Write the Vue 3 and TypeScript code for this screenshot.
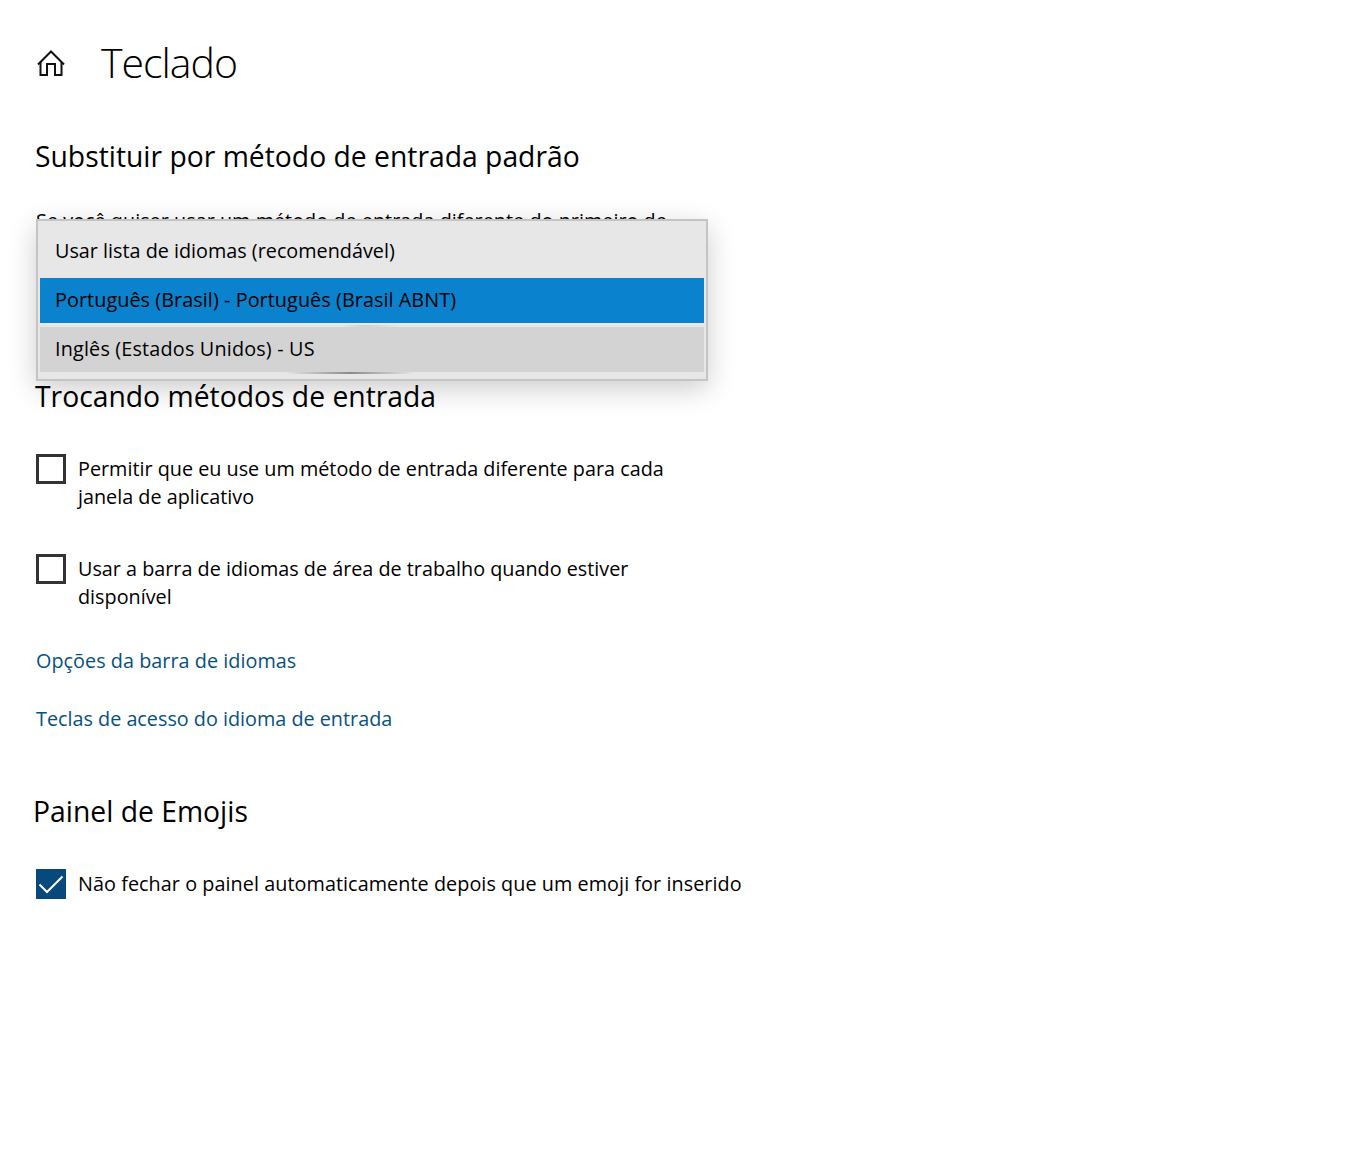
<script setup lang="ts">
const options = [
  { label: 'Usar lista de idiomas (recomendável)', cls: 'opt-plain' },
  { label: 'Português (Brasil) - Português (Brasil ABNT)', cls: 'opt-selected' },
  { label: 'Inglês (Estados Unidos) - US', cls: 'opt-hover' },
]
</script>

<template>
  <main class="page">
    <header class="head">
      <svg class="home" width="30" height="30" viewBox="0 0 30 30" fill="none" stroke="#111" stroke-width="2">
        <path d="M2 16.5 15 3.5l13 13" />
        <path d="M4.5 14v13h6.5V16h8v11h6.5V14" />
      </svg>
      <h1>Teclado</h1>
    </header>

    <section class="override">
      <h2>Substituir por método de entrada padrão</h2>
      <p class="hidden-text">Se você quiser usar um método de entrada diferente do primeiro de</p>
      <div class="popup">
        <div v-for="o in options" :key="o.label" class="opt" :class="o.cls">{{ o.label }}</div>
      </div>
    </section>

    <section class="switching">
      <h2>Trocando métodos de entrada</h2>
      <label class="check first">
        <span class="box"></span>
        <span class="lbl">Permitir que eu use um método de entrada diferente para cada janela de aplicativo</span>
      </label>
      <label class="check second">
        <span class="box"></span>
        <span class="lbl">Usar a barra de idiomas de área de trabalho quando estiver disponível</span>
      </label>
      <a class="link first-link">Opções da barra de idiomas</a>
      <a class="link second-link">Teclas de acesso do idioma de entrada</a>
    </section>

    <section class="emoji">
      <h2>Painel de Emojis</h2>
      <label class="check wide">
        <span class="box on">
          <svg width="30" height="30" viewBox="0 0 30 30" fill="none" stroke="#fff" stroke-width="2">
            <path d="M3.5 15.5l7.5 7.5L26.5 7.5" />
          </svg>
        </span>
        <span class="lbl">Não fechar o painel automaticamente depois que um emoji for inserido</span>
      </label>
    </section>
  </main>
</template>

<style>
html, body { background: #fff; }
</style>

<style scoped>
.page {
  width: 1350px;
  height: 1169px;
  box-sizing: border-box;
  padding: 36px 0 0 36px;
  overflow: hidden;
  background: #fff;
  color: #000;
  font-family: "Open Sans", "Noto Sans", sans-serif;
  font-size: 19.8px;
  line-height: 28px;
}
.head { display: flex; align-items: center; gap: 35px; height: 54px; }
.home { flex: none; }
h1 { margin: 0 0 2px; font-size: 41px; font-weight: 300; line-height: 50px; letter-spacing: -1px; }
h2 { margin: 0 0 0 -1px; font-size: 28.3px; font-weight: 400; line-height: 38px; }
.override { position: relative; margin-top: 47px; height: 240px; }
.hidden-text { margin: 32px 0 0; letter-spacing: 0.03px; }
.popup {
  position: absolute;
  left: 0;
  top: 82px;
  width: 672px;
  height: 162px;
  box-sizing: border-box;
  padding: 0 2px;
  border: 2px solid #c4c4c4;
  background: #e7e7e7;
  box-shadow: 0 8px 26px rgba(0, 0, 0, 0.2);
}
.opt { position: relative; height: 45px; padding-left: 15px; line-height: 45px; }
.opt-plain { margin: 7px 0 5px; }
.opt-selected { background: #0a82ce; line-height: 43px; letter-spacing: 0.07px; }
.opt-hover { margin-top: 4px; background: #d3d3d3; line-height: 43px; letter-spacing: 0.18px; }
.opt-hover::before {
  content: "";
  position: absolute;
  left: 300px;
  top: -2px;
  width: 60px;
  height: 2px;
  background: linear-gradient(90deg, rgba(255,255,255,0), #d0d0d0 40%, rgba(255,255,255,0));
}
.opt-hover::after {
  content: "";
  position: absolute;
  left: 245px;
  top: 45px;
  width: 130px;
  height: 2px;
  background: linear-gradient(90deg, rgba(90,90,90,0), #8a8a8a 50%, rgba(90,90,90,0));
}
.check { display: flex; gap: 12px; width: 680px; }
.check.wide { width: 900px; letter-spacing: 0.06px; }
.first { margin-top: 39px; }
.second { margin-top: 43px; }
.box {
  flex: none;
  width: 30px;
  height: 30px;
  box-sizing: border-box;
  border: 3px solid #333;
}
.box.on { border: 0; background: #06497a; }
.box.on svg { display: block; }
.lbl { display: block; padding-top: 1px; }
.link { display: block; color: #06517f; }
.first-link { margin-top: 36px; letter-spacing: 0.04px; }
.second-link { margin-top: 30px; }
.emoji { margin-top: 59px; }
.emoji h2 { margin-left: -3px; }
.emoji .check { margin-top: 39px; }
</style>
